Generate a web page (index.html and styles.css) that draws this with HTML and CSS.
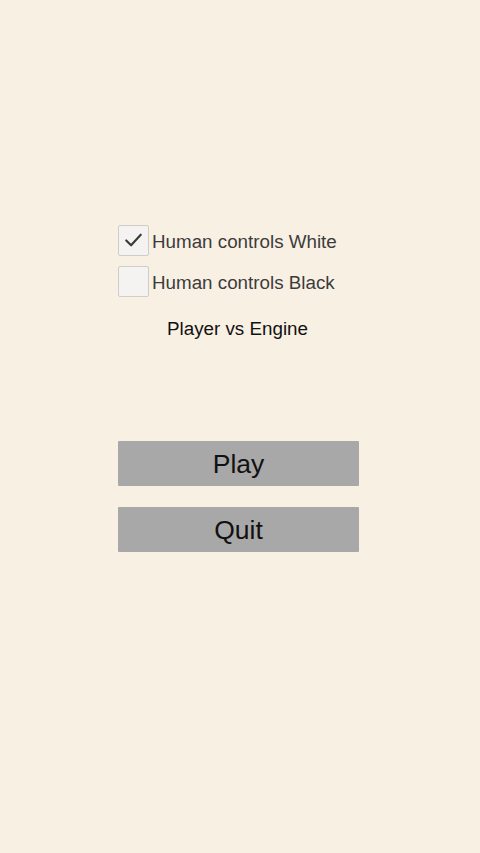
FILE: index.html
```html
<!DOCTYPE html>
<html>
<head>
<meta charset="utf-8">
<link rel="stylesheet" href="styles.css">
</head>
<body>
<div class="menu">
  <label class="option">
    <span class="box">
      <svg viewBox="0 0 30 30" width="30" height="30"><path d="M7.5 15.5 L12.5 20.5 L22.5 9.5" fill="none" stroke="#3a3a3a" stroke-width="2.2" stroke-linecap="round" stroke-linejoin="round"/></svg>
    </span>
    <span class="label">Human controls White</span>
  </label>
  <label class="option">
    <span class="box"></span>
    <span class="label">Human controls Black</span>
  </label>
  <div class="mode">Player vs Engine</div>
  <div class="buttons">
    <div class="btn">Play</div>
    <div class="btn">Quit</div>
  </div>
</div>
</body>
</html>
```
FILE: styles.css
```css
html, body {
  margin: 0;
  padding: 0;
  background: #f9f0e4;
  width: 480px;
  height: 853px;
  overflow: hidden;
  font-family: "Liberation Sans", Arial, sans-serif;
}
.menu {
  padding-top: 225px;
  padding-left: 118px;
  width: 241px;
  display: flex;
  flex-direction: column;
}
.option {
  display: flex;
  align-items: center;
  height: 30px;
  margin-bottom: 11px;
}
.box {
  box-sizing: border-box;
  width: 31px;
  height: 31px;
  background: #f4f3f1;
  border: 1px solid #cfcdca;
  border-radius: 2px;
  display: flex;
  align-items: center;
  justify-content: center;
}
.box svg {
  display: block;
}
.label {
  margin-left: 3px;
  font-size: 18.8px;
  color: #3c3c3c;
  position: relative;
  top: 2px;
}
.mode {
  margin-top: 11px;
  text-align: center;
  font-size: 18.8px;
  color: #111;
  margin-left: -2px;
}
.buttons {
  margin-top: 101px;
  display: flex;
  flex-direction: column;
  gap: 21px;
}
.btn {
  height: 45px;
  background: #a8a8a8;
  color: #111;
  font-size: 26.5px;
  padding-top: 2px;
  box-sizing: border-box;
  display: flex;
  align-items: center;
  justify-content: center;
  border-radius: 1px;
}
```
